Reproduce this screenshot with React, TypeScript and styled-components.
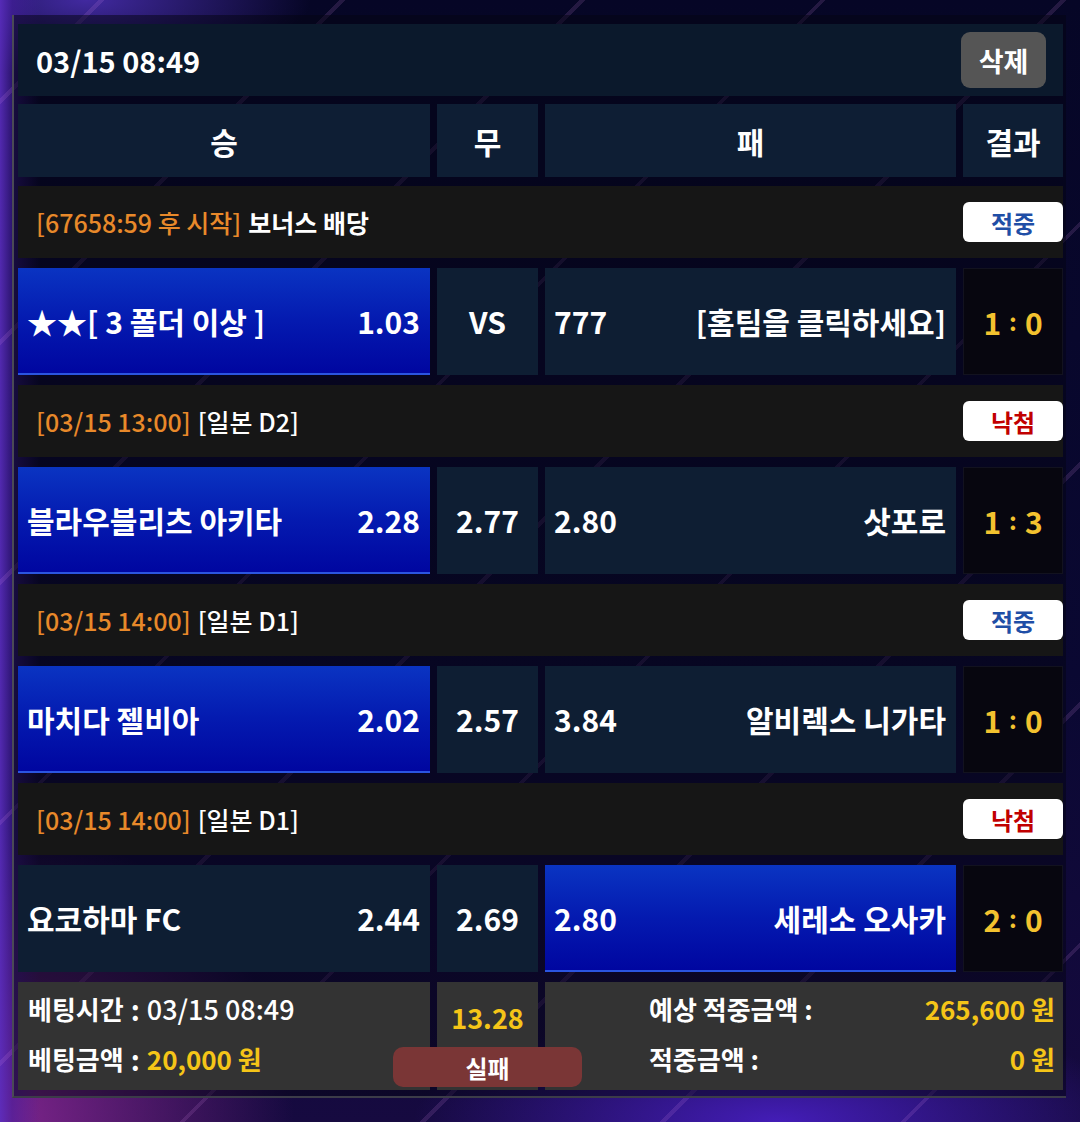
import styled, { createGlobalStyle } from 'styled-components';

const GlobalStyle = createGlobalStyle`
  * { box-sizing: border-box; }
  body {
    margin: 0;
    font-family: "Noto Sans CJK KR", "Noto Sans", sans-serif;
    background: #07072a;
  }
`;

const COLS = '412px 101px 411px 100px';

const Page = styled.div`
  width: 1080px;
  height: 1122px;
  overflow: hidden;
  padding: 15px 0 0 12px;
  background:
    repeating-linear-gradient(135deg, transparent 0 70px, rgba(220, 140, 235, 0.14) 70px 74px, transparent 74px 170px),
    linear-gradient(90deg, rgba(90, 45, 190, 0.9) 0, rgba(70, 30, 160, 0.6) 12px, transparent 40px),
    radial-gradient(ellipse 420px 420px at 0% 100%, rgba(140, 40, 150, 0.9), transparent 70%),
    radial-gradient(ellipse 520px 160px at 72% 100%, rgba(70, 30, 190, 0.95), transparent 70%),
    radial-gradient(ellipse 320px 110px at 8% 0%, rgba(80, 50, 190, 0.8), transparent 70%),
    linear-gradient(180deg, #060626 0%, #0a0832 60%, #160a40 100%);
`;

const Frame = styled.div`
  width: 1054px;
  display: flex;
  flex-direction: column;
  gap: 10px;
  padding: 9px 3px 6px 4px;
  border-left: 2px solid #4a4a55;
  border-bottom: 2px solid #3c3c48;
  background: rgba(4, 4, 18, 0.5);
`;

const TopBar = styled.div`
  height: 72px;
  display: flex;
  align-items: center;
  justify-content: space-between;
  padding: 0 17px 0 18px;
  background: #0b192c;
  color: #fff;
  font-size: 29px;
  font-weight: 700;
  margin-bottom: -2px;
`;

const DeleteButton = styled.button`
  width: 85px;
  height: 56px;
  border: none;
  border-radius: 9px;
  background: #555555;
  color: #fff;
  font-family: inherit;
  font-size: 27px;
  font-weight: 700;
`;

const GridRow = styled.div<{ h: number }>`
  display: grid;
  grid-template-columns: ${COLS};
  column-gap: 7px;
  height: ${(p) => p.h}px;
`;

const HeadRow = styled(GridRow)`
  margin-bottom: -1px;
`;

const HeadCell = styled.div`
  display: flex;
  align-items: center;
  justify-content: center;
  background: #0e1e34;
  color: #fff;
  font-size: 30px;
  font-weight: 700;
`;

const InfoRow = styled.div`
  height: 72px;
  display: flex;
  align-items: center;
  justify-content: space-between;
  padding-left: 18px;
  background: #161616;
  font-size: 25px;
  font-weight: 500;
  color: #fff;
`;

const InfoText = styled.div`
  display: flex;
  gap: 7px;
`;

const Orange = styled.span`
  color: #e8892a;
`;

const Title = styled.span<{ bold?: boolean }>`
  font-weight: ${(p) => (p.bold ? 700 : 500)};
`;

const Badge = styled.div<{ win: boolean }>`
  width: 100px;
  height: 40px;
  display: flex;
  align-items: center;
  justify-content: center;
  background: #fff;
  border-radius: 6px;
  font-size: 24px;
  font-weight: 700;
  color: ${(p) => (p.win ? '#1f4ea6' : '#c10000')};
`;

const Cell = styled.div<{ picked?: boolean }>`
  display: flex;
  align-items: center;
  color: #fff;
  font-size: 30px;
  font-weight: 700;
  background: ${(p) =>
    p.picked ? 'linear-gradient(180deg, #0a34c2 0%, #041ab0 50%, #0006a0 100%)' : '#0e1e33'};
  border-bottom: 2px solid ${(p) => (p.picked ? '#2b55e0' : '#0e1e33')};
`;

const SideCell = styled(Cell)`
  justify-content: space-between;
  padding: 0 10px 0 9px;
  white-space: nowrap;
`;

const DrawCell = styled(Cell)`
  justify-content: center;
`;

const ResultCell = styled.div`
  display: flex;
  align-items: center;
  justify-content: center;
  gap: 8px;
  background: #07060f;
  border: 1px solid #12121f;
  color: #f3c22f;
  font-size: 30px;
  font-weight: 700;
`;

const Colon = styled.span`
  font-size: 24px;
  font-weight: 700;
  margin-top: -2px;
`;

const SummaryRow = styled.div`
  position: relative;
  display: grid;
  grid-template-columns: 412px 101px 518px;
  column-gap: 7px;
  height: 108px;
`;

const SummaryBox = styled.div`
  background: #333333;
  color: #fff;
  font-size: 26px;
  font-weight: 700;
`;

const LeftSummary = styled(SummaryBox)`
  display: flex;
  flex-direction: column;
  justify-content: center;
  gap: 16px;
  padding: 0 0 4px 10px;
`;

const Line = styled.div`
  display: flex;
  align-items: center;
  line-height: 34px;
  white-space: nowrap;
`;

const Sep = styled.span`
  margin: 0 7px;
  font-size: 28px;
`;

const Plain = styled.span`
  font-weight: 500;
  font-size: 27px;
`;

const Yellow = styled.span`
  color: #f5c518;
`;

const OddsSummary = styled(SummaryBox)`
  display: flex;
  justify-content: center;
  padding-top: 16px;
  color: #f5c518;
  font-size: 27px;
`;

const RightSummary = styled(SummaryBox)`
  display: flex;
  flex-direction: column;
  justify-content: center;
  gap: 16px;
  padding: 0 8px 4px 104px;
`;

const SpreadLine = styled(Line)`
  justify-content: space-between;
`;

const FailButton = styled.div`
  position: absolute;
  left: 375px;
  top: 65px;
  width: 189px;
  height: 40px;
  display: flex;
  align-items: center;
  justify-content: center;
  border-radius: 10px;
  background: #7a3636;
  color: #fff;
  font-size: 24px;
  font-weight: 700;
`;

type Match = {
  tag: string;
  title: string;
  titleBold?: boolean;
  win: boolean;
  home: string;
  homeOdds: string;
  draw: string;
  awayOdds: string;
  away: string;
  pick: 'home' | 'away';
  score: [number, number];
};

const matches: Match[] = [
  {
    tag: '[67658:59 후 시작]',
    title: '보너스 배당',
    titleBold: true,
    win: true,
    home: '★★[ 3 폴더 이상 ]',
    homeOdds: '1.03',
    draw: 'VS',
    awayOdds: '777',
    away: '[홈팀을 클릭하세요]',
    pick: 'home',
    score: [1, 0],
  },
  {
    tag: '[03/15 13:00]',
    title: '[일본 D2]',
    win: false,
    home: '블라우블리츠 아키타',
    homeOdds: '2.28',
    draw: '2.77',
    awayOdds: '2.80',
    away: '삿포로',
    pick: 'home',
    score: [1, 3],
  },
  {
    tag: '[03/15 14:00]',
    title: '[일본 D1]',
    win: true,
    home: '마치다 젤비아',
    homeOdds: '2.02',
    draw: '2.57',
    awayOdds: '3.84',
    away: '알비렉스 니가타',
    pick: 'home',
    score: [1, 0],
  },
  {
    tag: '[03/15 14:00]',
    title: '[일본 D1]',
    win: false,
    home: '요코하마 FC',
    homeOdds: '2.44',
    draw: '2.69',
    awayOdds: '2.80',
    away: '세레소 오사카',
    pick: 'away',
    score: [2, 0],
  },
];

const App = () => {
  return (
    <Page>
      <GlobalStyle />
      <Frame>
        <TopBar>
          <span>03/15 08:49</span>
          <DeleteButton>삭제</DeleteButton>
        </TopBar>

        <HeadRow h={73}>
          <HeadCell>승</HeadCell>
          <HeadCell>무</HeadCell>
          <HeadCell>패</HeadCell>
          <HeadCell>결과</HeadCell>
        </HeadRow>

        {matches.map((m, i) => (
          <div key={i} style={{ display: 'contents' }}>
            <InfoRow>
              <InfoText>
                <Orange>{m.tag}</Orange>
                <Title bold={m.titleBold}>{m.title}</Title>
              </InfoText>
              <Badge win={m.win}>{m.win ? '적중' : '낙첨'}</Badge>
            </InfoRow>
            <GridRow h={107}>
              <SideCell picked={m.pick === 'home'}>
                <span>{m.home}</span>
                <span>{m.homeOdds}</span>
              </SideCell>
              <DrawCell>{m.draw}</DrawCell>
              <SideCell picked={m.pick === 'away'}>
                <span>{m.awayOdds}</span>
                <span>{m.away}</span>
              </SideCell>
              <ResultCell>
                <span>{m.score[0]}</span>
                <Colon>:</Colon>
                <span>{m.score[1]}</span>
              </ResultCell>
            </GridRow>
          </div>
        ))}

        <SummaryRow>
          <LeftSummary>
            <Line>
              베팅시간<Sep>:</Sep>
              <Plain>03/15 08:49</Plain>
            </Line>
            <Line>
              베팅금액<Sep>:</Sep>
              <Yellow>20,000 원</Yellow>
            </Line>
          </LeftSummary>
          <OddsSummary>13.28</OddsSummary>
          <RightSummary>
            <SpreadLine>
              <span>예상 적중금액 :</span>
              <Yellow>265,600 원</Yellow>
            </SpreadLine>
            <SpreadLine>
              <span>적중금액 :</span>
              <Yellow>0 원</Yellow>
            </SpreadLine>
          </RightSummary>
          <FailButton>실패</FailButton>
        </SummaryRow>
      </Frame>
    </Page>
  );
};

export default App;
